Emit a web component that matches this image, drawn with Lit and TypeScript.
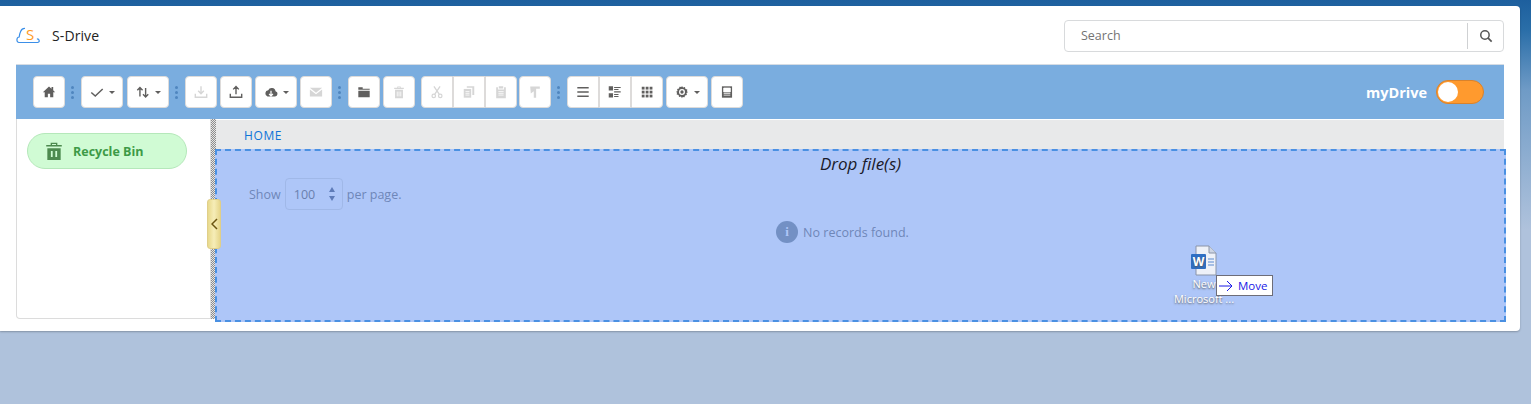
import { LitElement, html, css, svg } from "lit";
import { customElement } from "lit/decorators.js";

const ic = (body: unknown, vb = "0 0 16 16") => html`<svg class="ic" viewBox=${vb} width="16" height="16">${body}</svg>`;
const caret = html`<span class="caret"></span>`;

const home = ic(svg`<path d="M8 1.6 1 8.2h2.1V14h3.6v-4h2.6v4h3.6V8.2H15l-2.2-2.1V2.4h-1.9v1.9z" fill="currentColor"/>`);
const check = ic(svg`<path d="M1.5 8.5 6 12.6 14.5 4.6" fill="none" stroke="currentColor" stroke-width="1.7"/>`);
const sort = ic(svg`<path d="M4.5 13V3M1.5 6l3-3.2 3 3.2M11 3.5v10M8 10.5l3 3.2 3-3.2" fill="none" stroke="currentColor" stroke-width="1.6"/>`);
const download = ic(svg`<path d="M8 1.5v8M4.8 6.6 8 10l3.2-3.4M1.5 10v4h13v-4" fill="none" stroke="currentColor" stroke-width="1.6"/>`);
const upload = ic(svg`<path d="M8 10.5V2M4.8 5 8 1.6 11.2 5M1.5 10v4h13v-4" fill="none" stroke="currentColor" stroke-width="1.6"/>`);
const cloud = ic(svg`<path d="M4 13h8.6a3 3 0 0 0 .6-5.9A4.4 4.4 0 0 0 4.8 6 3.6 3.6 0 0 0 4 13z" fill="currentColor"/><path d="M8 6.5v6M5.8 10.2 8 12.6l2.2-2.4" fill="none" stroke="#fff" stroke-width="1.4"/>`);
const mail = ic(svg`<path d="M1 3.2h14L8 8.8zM1 5v8h14V5L8 10.6z" fill="currentColor"/>`);
const folder = ic(svg`<path d="M1.5 2.5h5v1.7h8v1.3h-13zM1.5 6.5h13V14h-13z" fill="currentColor"/>`);
const trash = ic(svg`<path d="M2.5 3.2h11v1.3h-11zM6 3V1.6h4V3h-1V2.6H7V3zM3.5 5.5h9V15h-9zM6 7.5V13M8 7.5V13M10 7.5V13" fill="currentColor"/><path d="M6 7.5V13M8 7.5V13M10 7.5V13" stroke="#fff" stroke-width=".9"/>`);
const cut = ic(svg`<path d="M4.5 1.5 10.5 10.5M11.5 1.5 5.5 10.5" fill="none" stroke="currentColor" stroke-width="1.5"/><circle cx="4.3" cy="12.5" r="2" fill="none" stroke="currentColor" stroke-width="1.4"/><circle cx="11.7" cy="12.5" r="2" fill="none" stroke="currentColor" stroke-width="1.4"/>`);
const copy = ic(svg`<path d="M5.5 3V1.5h8.5v10h-2.2V3z" fill="currentColor"/><path d="M2 4.5h8.5v10H2z" fill="currentColor"/><path d="M4 7.5h4.5M4 9.5h4.5M4 11.5h4.5" stroke="#fff" stroke-width=".9"/>`);
const paste = ic(svg`<path d="M5.5 1.5h5V4h-5zM2.5 2.6h2v2.4h7V2.6h2V15h-11z" fill="currentColor"/><path d="M5 7.5h6M5 9.5h6M5 11.5h6" stroke="#fff" stroke-width=".9"/>`);
const moveUp = ic(svg`<path d="M2.5 1.8h11v2.6h-4.2V14.5H6.6V7.2L3.2 9.8z" fill="currentColor"/>`);
const list = ic(svg`<path d="M1.5 3.2h13M1.5 8h13M1.5 12.8h13" stroke="currentColor" stroke-width="1.6"/>`);
const detail = ic(svg`<path d="M1.5 2.2h3.6v3.4H1.5zM1.5 10.2h3.6v3.4H1.5zM7 2.8h7.5M7 5.2h5M7 7.8h7.5M7 10.8h5M7 13.2h5" stroke="currentColor" stroke-width="1.3" fill="currentColor"/>`);
const grid = ic(svg`${[2, 6.5, 11].flatMap((y) => [2, 6.5, 11].map((x) => svg`<rect x=${x} y=${y} width="3.2" height="3.2" fill="currentColor"/>`))}`);
const gear = ic(svg`<path d="M8 1l1.2 1.9 2.2-.5.5 2.2 2.2.5-.5 2.2L15 8l-1.9 1.2.5 2.2-2.2.5-.5 2.2-2.2-.5L8 15l-1.2-1.9-2.2.5-.5-2.2-2.2-.5.5-2.2L1 8l1.9-1.2-.5-2.2 2.2-.5.5-2.2 2.2.5z" fill="currentColor"/><circle cx="8" cy="8" r="3.4" fill="#fff"/><circle cx="8" cy="8" r="1.9" fill="currentColor"/>`);
const book = ic(svg`<path d="M2.2 1.5h11.6v13H2.2z" fill="currentColor"/><path d="M4.2 3.5h7.6v4.4H4.2zM4.2 9.6h7.6M4.2 11.6h7.6" fill="#fff" stroke="#fff" stroke-width=".9"/>`);

@customElement("app-root")
export class AppRoot extends LitElement {
  static styles = css`
    :host { display: block; height: 404px; overflow: hidden; font-family: "Open Sans", "Liberation Sans", sans-serif; color: #16325c;
      background: linear-gradient(#1d5f9e 0, #2a6ea8 30px, #6f9bc6 90px, #afc2dc 230px, #afc2dc 100%); }
    .card { margin: 6px 11px 0 0; height: 325px; box-sizing: border-box; background: #fff; border-radius: 0 4px 4px 0; box-shadow: 0 1px 2px rgba(0,0,0,.25); padding: 0 16px 0 16px; display: flex; flex-direction: column; }
    .head { height: 58px; display: flex; align-items: center; flex: none; }
    .logo { width: 24px; height: 18px; margin-top: 0; flex: none; }
    .title { margin-left: 12px; font-size: 14px; color: #222; letter-spacing: .1px; }
    .search { margin-left: auto; margin-top: 1px; width: 440px; height: 32px; box-sizing: border-box; border: 1px solid #d8dadc; border-radius: 4px; display: flex; align-items: center; }
    .search span { flex: 1; padding-left: 16px; font-size: 12.5px; color: #737373; }
    .sbtn { width: 35px; height: 26px; border-left: 1px solid #cfd1d3; display: flex; align-items: center; justify-content: center; color: #555; }
    .toolbar { height: 55px; flex: none; background: #7aaddf; border-top: 1px solid #d5dce4; box-sizing: border-box; display: flex; align-items: center; padding: 0 20px 0 17px; }
    .grp { display: flex; gap: 3px; }
    .seg { display: flex; }
    .btn { width: 32px; height: 32px; box-sizing: border-box; background: #fff; border: 1px solid #dddbda; border-radius: 4px; display: flex; align-items: center; justify-content: center; gap: 5px; color: #605f5e; flex: none; }
    .btn.w { width: 42px; }
    .btn.off { color: #d6d6d6; }
    .seg .btn { border-radius: 0; margin-right: 0; }
    .seg .btn:first-child { border-radius: 4px 0 0 4px; }
    .seg .btn:last-child { border-radius: 0 4px 4px 0; }
    .ic { width: 14px; height: 14px; flex: none; display: block; }
    .caret { width: 0; height: 0; border-left: 3px solid transparent; border-right: 3px solid transparent; border-top: 3px solid currentColor; }
    .dots { width: 4px; margin: 0 6px 0 6px; display: flex; flex-direction: column; gap: 2px; flex: none; }
    .dots i { width: 3px; height: 3px; border-radius: 50%; background: #4f86bf; }
    .my { margin-left: auto; color: #fff; font-weight: 700; font-size: 14.5px; }
    .toggle { margin-left: 9px; width: 48px; height: 24px; box-sizing: border-box; border-radius: 12px; background: #ff9a2e; border: 1px solid #d9822b; padding: 1px; }
    .toggle i { display: block; width: 20px; height: 20px; border-radius: 50%; background: #fff; }
    .body { height: 200px; flex: none; display: flex; position: relative; }
    .side { width: 195px; box-sizing: border-box; border: 1px solid #dcdcdc; border-top: 0; border-radius: 0 0 0 4px; padding: 14px 10px; flex: none; }
    .bin { width: 160px; height: 36px; box-sizing: border-box; background: #d0fbd4; border: 1px solid #b5e8ba; border-radius: 18px; display: flex; align-items: center; padding-left: 17px; gap: 10px; color: #3d9a47; font-weight: 700; font-size: 12.5px; }
    .bin svg { width: 18px; height: 20px; color: #4d8a4f; flex: none; }
    .split { width: 5px; flex: none; background: repeating-conic-gradient(#8c8c8c 0 25%, #e6e6e6 0 50%) 0 0 / 2px 2px; }
    .main { flex: 1; display: flex; flex-direction: column; min-width: 0; }
    .crumb { height: 29px; flex: none; background: #e8e9ea; box-sizing: border-box; padding: 8px 0 0 28px; font-size: 12px; color: #0f74d8; letter-spacing: .6px; line-height: 16px; margin-top: 1px; }
    .drop { height: 173px; flex: none; margin: 0 -2px 0 -1px; box-sizing: border-box; background: #aec6f8; border: 2px dashed #4a90e2; position: relative; padding: 0 32px; display: flex; flex-direction: column; }
    .dtitle { text-align: center; font-style: italic; font-size: 17px; color: #1a1a2a; line-height: 24px; margin-top: 1px; }
    .show { display: flex; align-items: center; gap: 4px; margin-top: 2px; font-size: 12.5px; color: #6f87b8; }
    .num { width: 58px; height: 32px; box-sizing: border-box; border: 1px solid #a0b8e8; border-radius: 4px; display: flex; align-items: center; padding-left: 8px; color: #6a80ae; position: relative; }
    .num b { position: absolute; right: 7px; top: 8px; display: flex; flex-direction: column; gap: 4px; }
    .num b i { width: 0; height: 0; border-left: 3px solid transparent; border-right: 3px solid transparent; }
    .num b i:first-child { border-bottom: 5px solid #5e7bb8; }
    .num b i:last-child { border-top: 5px solid #5e7bb8; }
    .none { display: flex; align-items: center; justify-content: center; gap: 5px; margin-top: 11px; padding-right: 36px; font-size: 12.5px; color: #6f87b8; }
    .none i { width: 22px; height: 22px; border-radius: 50%; background: #7390c4; color: #aec6f8; font: 700 13px/22px "Liberation Serif", serif; text-align: center; }
    .ghost { position: absolute; left: 954px; top: 94px; width: 66px; text-align: center; color: #fff; font-size: 11px; line-height: 15px; text-shadow: 0 1px 2px #555; }
    .ghost svg { display: block; margin: 0 auto -1px; width: 28px; height: 32px; }
    .tip { position: absolute; left: 999px; top: 124px; width: 57px; height: 21px; box-sizing: border-box; background: #fff; border: 1px solid #6d6d78; display: flex; align-items: center; gap: 5px; padding-left: 2px; font-size: 11.5px; color: #1a1ae6; }
    .tip svg { width: 14px; height: 12px; flex: none; }
    .handle { position: absolute; left: 191px; top: 80px; width: 14px; height: 50px; box-sizing: border-box; background: linear-gradient(90deg,#e8d98c,#f6edb8 50%,#e6d68a); border: 1px solid #e0cf8a; border-radius: 3px; display: flex; align-items: center; justify-content: center; color: #6b5410; }
  `;

  render() {
    const dots = html`<div class="dots"><i></i><i></i><i></i></div>`;
    return html`
      <div class="card">
        <div class="head">
          <svg class="logo" viewBox="0 0 24 18"><path d="M3 16.5h18.5c2.4 0 2.4-3.6-.6-3.6M3 16.5C.2 16.500.2 11.200 3.200 11c.3-3 1.500-9 5.800-8.500" fill="none" stroke="#3b8fe8" stroke-width="1.200"/><text x="10" y="14" font-size="15" fill="#ff9a1f" font-family="Open Sans">S</text></svg>
          <span class="title">S-Drive</span>
          <div class="search"><span>Search</span><div class="sbtn">${ic(svg`<circle cx="6.800" cy="6.800" r="4.800" fill="none" stroke="currentColor" stroke-width="1.700"/><path d="M10.200 10.200 14.500 14.500" stroke="currentColor" stroke-width="1.900"/>`)}</div></div>
        </div>
        <div class="toolbar">
          <div class="btn">${home}</div>
          ${dots}
          <div class="grp"><div class="btn w">${check}${caret}</div><div class="btn w" style="margin-left:1px">${sort}${caret}</div></div>
          ${dots}
          <div class="grp"><div class="btn off">${download}</div><div class="btn">${upload}</div><div class="btn w">${cloud}${caret}</div><div class="btn off">${mail}</div></div>
          ${dots}
          <div class="grp"><div class="btn">${folder}</div><div class="btn off">${trash}</div></div>
          <div class="seg" style="margin-left:6px"><div class="btn off">${cut}</div><div class="btn off">${copy}</div><div class="btn off">${paste}</div></div>
          <div class="btn off" style="margin-left:2px">${moveUp}</div>
          ${dots}
          <div class="seg"><div class="btn">${list}</div><div class="btn">${detail}</div><div class="btn">${grid}</div></div>
          <div class="btn w" style="margin-left:3px">${gear}${caret}</div>
          <div class="btn" style="margin-left:3px">${book}</div>
          <span class="my">myDrive</span>
          <div class="toggle"><i></i></div>
        </div>
        <div class="body">
          <div class="side">
            <div class="bin"><svg viewBox="0 0 16 18"><path d="M1 3.500h14V5H1zM5 3.500V1.500h6v2H9.800V2.700H6.200v.8zM2 6.500h12V17H2z" fill="currentColor"/><path d="M6 9v5.500M10 9v5.500" stroke="#d0fbd4" stroke-width="1.600"/></svg>Recycle Bin</div>
          </div>
          <div class="split"></div>
          <div class="main">
            <div class="crumb">HOME</div>
            <div class="drop">
              <div class="dtitle">Drop file(s)</div>
              <div class="show">Show <div class="num">100<b><i></i><i></i></b></div> per page.</div>
              <div class="none"><i>i</i>No records found.</div>
              <div class="ghost">
                <svg viewBox="0 0 28 32"><path d="M6 1h13l7 7v22H6z" fill="#eef1f8" stroke="#8a94a8"/><path d="M19 1v7h7" fill="#cdd5e4" stroke="#8a94a8"/><rect x="1" y="9" width="15" height="15" rx="1" fill="#2f6fc4"/><text x="8.500" y="21" text-anchor="middle" font-size="12" font-weight="700" fill="#fff" font-family="Open Sans">W</text><path d="M18 14h6M18 17h6M18 20h6" stroke="#5a8ad0"/></svg>
                New<br />Microsoft ...
              </div>
              <div class="tip"><svg viewBox="0 0 14 12"><path d="M0 6h13M8 1l5 5-5 5" fill="none" stroke="#1a1ae6"/></svg>Move</div>
            </div>
          </div>
          <div class="handle"><svg width="7" height="12" viewBox="0 0 7 12"><path d="M6 1 1 6l5 5" fill="none" stroke="currentColor" stroke-width="1.500"/></svg></div>
        </div>
      </div>`;
  }
}
